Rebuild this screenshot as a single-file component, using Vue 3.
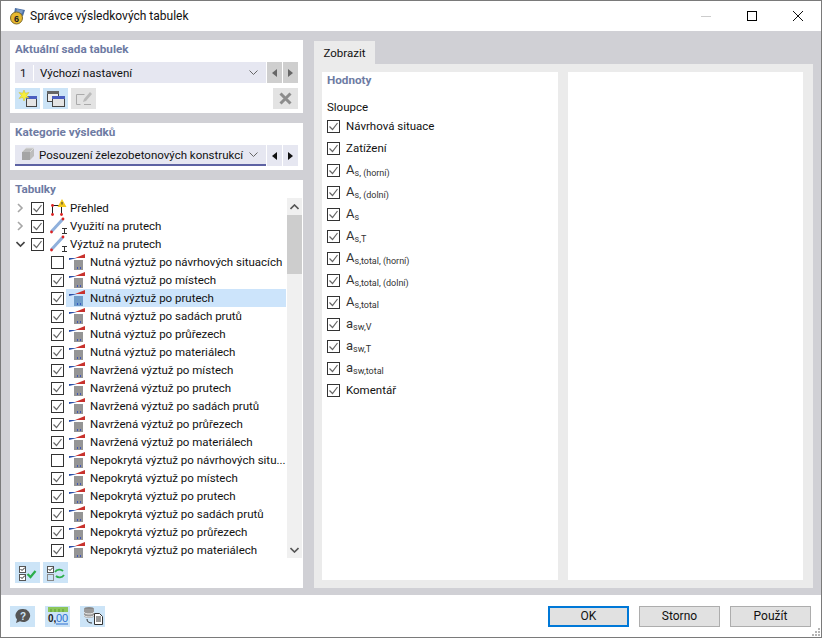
<script setup>
const tree = [
  { label: 'Přehled', icon: 'overview', chevron: 'right' },
  { label: 'Využití na prutech', icon: 'member', chevron: 'right' },
  { label: 'Výztuž na prutech', icon: 'member', chevron: 'down' },
]
const children = [
  ['Nutná výztuž po návrhových situacích', false],
  ['Nutná výztuž po místech', true],
  ['Nutná výztuž po prutech', true, true],
  ['Nutná výztuž po sadách prutů', true],
  ['Nutná výztuž po průřezech', true],
  ['Nutná výztuž po materiálech', true],
  ['Navržená výztuž po místech', true],
  ['Navržená výztuž po prutech', true],
  ['Navržená výztuž po sadách prutů', true],
  ['Navržená výztuž po průřezech', true],
  ['Navržená výztuž po materiálech', true],
  ['Nepokrytá výztuž po návrhových situ...', false],
  ['Nepokrytá výztuž po místech', true],
  ['Nepokrytá výztuž po prutech', true],
  ['Nepokrytá výztuž po sadách prutů', true],
  ['Nepokrytá výztuž po průřezech', true],
  ['Nepokrytá výztuž po materiálech', true],
]
const columns = [
  { text: 'Návrhová situace' },
  { text: 'Zatížení' },
  { main: 'A', sub: 's, (horní)' },
  { main: 'A', sub: 's, (dolní)' },
  { main: 'A', sub: 's' },
  { main: 'A', sub: 's,T' },
  { main: 'A', sub: 's,total, (horní)' },
  { main: 'A', sub: 's,total, (dolní)' },
  { main: 'A', sub: 's,total' },
  { main: 'a', sub: 'sw,V' },
  { main: 'a', sub: 'sw,T' },
  { main: 'a', sub: 'sw,total' },
  { text: 'Komentář' },
]
</script>

<template>
  <div class="window">
    <header class="titlebar">
      <svg class="app-icon" width="18" height="18" viewBox="0 0 18 18">
        <path d="M6 1l10 2-2 6-9-2z" fill="#4a6fa5" />
        <path d="M8 2l6 1.500-1 3-6-1.500z" fill="#7f9cc4" />
        <circle cx="7.500" cy="11" r="6" fill="#e8b92e" stroke="#7d6a2a" />
        <text x="7.500" y="14.500" class="app-six">6</text>
      </svg>
      <span class="title">Správce výsledkových tabulek</span>
      <div class="win-controls">
        <svg width="12" height="12" viewBox="0 0 12 12"><path d="M1 6.500h10" stroke="#ccc" /></svg>
        <svg width="12" height="12" viewBox="0 0 12 12"><rect x="1.500" y="1.500" width="9" height="9" fill="none" stroke="#000" /></svg>
        <svg width="12" height="12" viewBox="0 0 12 12"><path d="M1 1l10 10M11 1L1 11" stroke="#111" /></svg>
      </div>
    </header>

    <main class="body">
      <section class="left">
        <div class="panel set-panel">
          <h3 class="panel-title">Aktuální sada tabulek</h3>
          <div class="combo-row">
            <div class="combo">
              <span class="combo-num">1</span>
              <span class="combo-text">Výchozí nastavení</span>
              <svg class="combo-chevron" width="9" height="6" viewBox="0 0 9 6"><path d="M.5 .5l4 4 4-4" fill="none" stroke="#666" /></svg>
            </div>
            <button class="nav nav-off"><svg width="5" height="8" viewBox="0 0 5 8"><path d="M5 0v8L0 4z" fill="#666" /></svg></button>
            <button class="nav nav-off"><svg width="5" height="8" viewBox="0 0 5 8"><path d="M0 0v8l5-4z" fill="#666" /></svg></button>
          </div>
          <div class="tool-row">
            <button class="tool">
              <svg width="20" height="18" viewBox="0 0 20 18">
                <rect x="8.500" y="6.500" width="10" height="10" fill="#e4e4e4" stroke="#444" />
                <rect x="8" y="6" width="11" height="3" fill="#4a5ec0" />
                <path d="M6 0l1.300 3.200L11 2.500 8.500 5.500 11 8 7.500 7.500 6 11 4.800 7.500 1 8.500 3.500 5.500 1 2.500l3.600.7z" fill="#f6ee3a" stroke="#c9b92a" stroke-width=".5" />
              </svg>
            </button>
            <button class="tool">
              <svg width="20" height="18" viewBox="0 0 20 18">
                <rect x="1.500" y="1.500" width="11" height="10" fill="#eee" stroke="#444" />
                <rect x="1" y="1" width="12" height="3" fill="#666" />
                <rect x="6.500" y="6.500" width="12" height="10" fill="#e4e4e4" stroke="#444" />
                <rect x="6" y="6" width="13" height="3" fill="#4a5ec0" />
              </svg>
            </button>
            <button class="tool tool-off">
              <svg width="20" height="18" viewBox="0 0 20 18">
                <path d="M2.500 4.500h8M2.500 4.500v10h4M10 14.500h7" fill="none" stroke="#aaa" />
                <path d="M9 12l1-3 6-7 2 2-6 7z" fill="#bbb" />
              </svg>
            </button>
            <button class="tool tool-off tool-x">
              <svg width="13" height="13" viewBox="0 0 13 13"><path d="M1.500 1.500l10 10M11.500 1.500l-10 10" stroke="#8c8c8c" stroke-width="3" /></svg>
            </button>
          </div>
        </div>

        <div class="panel cat-panel">
          <h3 class="panel-title">Kategorie výsledků</h3>
          <div class="combo-row">
            <div class="combo combo-active">
              <svg class="cube" width="14" height="14" viewBox="0 0 14 14">
                <path d="M1 5l4-4h8v8l-4 4H1z" fill="#bdbdbd" />
                <path d="M1 5h8v8H1z" fill="#a5a5a5" />
                <path d="M9 5l4-4M1 5l4-4h8" fill="none" stroke="#dcdcdc" />
              </svg>
              <span class="combo-text">Posouzení železobetonových konstrukcí</span>
              <svg class="combo-chevron" width="9" height="6" viewBox="0 0 9 6"><path d="M.5 .5l4 4 4-4" fill="none" stroke="#666" /></svg>
            </div>
            <button class="nav"><svg width="5" height="8" viewBox="0 0 5 8"><path d="M5 0v8L0 4z" fill="#111" /></svg></button>
            <button class="nav"><svg width="5" height="8" viewBox="0 0 5 8"><path d="M0 0v8l5-4z" fill="#111" /></svg></button>
          </div>
        </div>

        <div class="panel tree-panel">
          <h3 class="panel-title">Tabulky</h3>
          <div class="tree-wrap">
            <div class="tree">
              <div v-for="item in tree" :key="item.label" class="row">
                <svg class="chev" width="9" height="10" viewBox="0 0 9 10">
                  <path v-if="item.chevron === 'right'" d="M2 1l4 4-4 4" fill="none" stroke="#a6a6a6" stroke-width="1.600" />
                  <path v-else d="M.5 3l4 4 4-4" fill="none" stroke="#444" stroke-width="1.600" />
                </svg>
                <span class="check">
                  <svg width="11" height="11" viewBox="0 0 11 11"><path d="M1.500 5.500l3 3 5-6.500" fill="none" stroke="#666" stroke-width="1.200" /></svg>
                </span>
                <svg v-if="item.icon === 'overview'" class="node-icon" width="18" height="18" viewBox="0 0 18 18">
                  <path d="M2.500 16V6.500h9V16" fill="none" stroke="#222" />
                  <circle cx="2.500" cy="6.500" r="1.400" fill="#d22" />
                  <circle cx="2.500" cy="15.500" r="1.400" fill="#d22" />
                  <circle cx="11.500" cy="15.500" r="1.400" fill="#d22" />
                  <path d="M12 0l4.500 8h-9z" fill="#f4c91e" />
                  <path d="M12 3v2.500" stroke="#333" />
                </svg>
                <svg v-else class="node-icon" width="18" height="18" viewBox="0 0 18 18">
                  <path d="M1.500 14.500L12.500 2.500" stroke="#8fb0dc" stroke-width="3" />
                  <circle cx="1.500" cy="15" r="1.400" fill="#d22" />
                  <circle cx="13" cy="2" r="1.400" fill="#d22" />
                  <path d="M12 11.500h5M12 16.500h5M14.500 11.500v5" stroke="#333" />
                </svg>
                <span class="row-label">{{ item.label }}</span>
              </div>
              <div v-for="c in children" :key="c[0]" class="row child">
                <span class="check">
                  <svg v-if="c[1]" width="11" height="11" viewBox="0 0 11 11"><path d="M1.500 5.500l3 3 5-6.500" fill="none" stroke="#666" stroke-width="1.200" /></svg>
                </span>
                <div class="child-body" :class="{ selected: c[2] }">
                  <svg class="leaf-icon" width="17" height="16" viewBox="0 0 17 16">
                    <path d="M0 4h8L0 6z" fill="#2b4fa8" />
                    <path d="M6 4l10-4v4z" fill="#c8322d" />
                    <rect x="5" y="6" width="9" height="10" :fill="c[2] ? '#6f9cc8' : '#959595'" />
                    <path d="M8 14h1M11 14h1" stroke="#2340c0" stroke-width="1.400" />
                  </svg>
                  <span class="row-label">{{ c[0] }}</span>
                </div>
              </div>
            </div>
            <div class="scrollbar">
              <div class="sb-btn"><svg width="9" height="6" viewBox="0 0 9 6"><path d="M.5 5l4-4 4 4" fill="none" stroke="#555" stroke-width="1.600" /></svg></div>
              <div class="sb-track"><div class="sb-thumb"></div></div>
              <div class="sb-btn"><svg width="9" height="6" viewBox="0 0 9 6"><path d="M.5 1l4 4 4-4" fill="none" stroke="#555" stroke-width="1.600" /></svg></div>
            </div>
          </div>
          <div class="tool-row tree-tools">
            <button class="tool">
              <svg width="20" height="18" viewBox="0 0 20 18">
                <rect x="1.500" y="2.500" width="6" height="6" fill="#fff" stroke="#555" />
                <rect x="1.500" y="10.500" width="6" height="6" fill="#fff" stroke="#555" />
                <path d="M2.500 5l1.500 1.500 3-3M2.500 13l1.500 1.500 3-3" fill="none" stroke="#222" />
                <path d="M9.500 10l3 3 5-6" fill="none" stroke="#2cae4a" stroke-width="2.200" />
              </svg>
            </button>
            <button class="tool">
              <svg width="20" height="18" viewBox="0 0 20 18">
                <rect x="1.500" y="2.500" width="6" height="6" fill="#fff" stroke="#555" />
                <rect x="1.500" y="10.500" width="6" height="6" fill="none" stroke="#888" />
                <path d="M2.500 5l1.500 1.500 3-3" fill="none" stroke="#222" />
                <path d="M9 8c2-3 6-3 8-1M18 11c-2 3-6 3-8 1" fill="none" stroke="#2cae4a" stroke-width="1.800" />
              </svg>
            </button>
          </div>
        </div>
      </section>

      <section class="right">
        <div class="tab">Zobrazit</div>
        <div class="tab-body">
          <div class="column-pane">
            <h3 class="panel-title hodnoty">Hodnoty</h3>
            <div class="sloupce">Sloupce</div>
            <div v-for="col in columns" :key="col.text || col.main + col.sub" class="col-row">
              <span class="check">
                <svg width="11" height="11" viewBox="0 0 11 11"><path d="M1.500 5.500l3 3 5-6.500" fill="none" stroke="#666" stroke-width="1.200" /></svg>
              </span>
              <span v-if="col.text" class="col-text">{{ col.text }}</span>
              <span v-else class="col-text sym">{{ col.main }}<sub>{{ col.sub }}</sub></span>
            </div>
          </div>
          <div class="empty-pane"></div>
        </div>
      </section>
    </main>

    <footer class="footer">
      <div class="foot-icons">
        <button class="tool">
          <svg width="20" height="18" viewBox="0 0 20 18">
            <path d="M10 2a7 6.500 0 1 1-3 12.300L3 16l1-3.500A7 6.500 0 0 1 10 2z" fill="#555" />
            <text x="10" y="12.500" class="help-mark">?</text>
          </svg>
        </button>
        <button class="tool">
          <svg width="22" height="20" viewBox="0 0 22 20">
            <rect x="1" y="1" width="20" height="5" fill="#8cc65a" />
            <path d="M4 3v3M8 3v3M12 3v3M16 3v3" stroke="#5c9a35" />
            <text x="1" y="16" class="num-a">0,</text>
            <text x="9" y="16" class="num-b">00</text>
            <path d="M9 18h12" stroke="#2a6fd0" />
          </svg>
        </button>
        <button class="tool">
          <svg width="22" height="20" viewBox="0 0 22 20">
            <ellipse cx="7" cy="3" rx="5" ry="2" fill="#888" />
            <path d="M2 3v7c0 2.600 10 2.600 10 0V3" fill="#9a9a9a" />
            <path d="M2 6c0 2.600 10 2.600 10 0M2 9c0 2.600 10 2.600 10 0" fill="none" stroke="#eee" />
            <path d="M5 13c0 3 2 4 5 4" fill="none" stroke="#333" />
            <path d="M12.500 7.500h5l3 3v8h-8z" fill="#fff" stroke="#333" />
            <path d="M14 11h5M14 13h5M14 15h5" stroke="#333" />
          </svg>
        </button>
      </div>
      <div class="foot-buttons">
        <button class="btn btn-primary">OK</button>
        <button class="btn">Storno</button>
        <button class="btn">Použít</button>
      </div>
      <svg class="grip" width="9" height="9" viewBox="0 0 9 9">
        <path d="M7 1h2v2H7zM4 4h2v2H4zM7 4h2v2H7zM1 7h2v2H1zM4 7h2v2H4zM7 7h2v2H7z" fill="#b5b5b5" />
      </svg>
    </footer>
  </div>
</template>

<style>
html, body { margin: 0; padding: 0; background: #fff; }
</style>

<style scoped>
* { box-sizing: border-box; }
.window {
  width: 822px;
  height: 638px;
  display: flex;
  flex-direction: column;
  border: 1px solid #7a7a7a;
  background: #fff;
  font-family: Roboto, "Open Sans", sans-serif;
  font-size: 11.500px;
  color: #111;
  overflow: hidden;
}
button { font-family: inherit; padding: 0; border: 0; }

.titlebar {
  height: 30px;
  flex: none;
  display: flex;
  align-items: center;
  padding: 0 0 1px 8px;
}
.app-icon { margin-right: 3px; }
.app-six { font: bold 9px "Liberation Sans", sans-serif; fill: #222; text-anchor: middle; }
.title { font-size: 12px; }
.win-controls {
  margin-left: auto;
  display: flex;
  align-items: center;
  gap: 34px;
  padding-right: 17px;
}

.body {
  flex: 1;
  min-height: 0;
  display: flex;
  gap: 11px;
  padding: 9px 8px 7px 9px;
  background: #d0d0d5;
}
.left { width: 293px; flex: none; display: flex; flex-direction: column; gap: 10px; }
.panel { background: #fff; padding: 2px 5px 0; }
.set-panel { height: 73px; }
.cat-panel { height: 47px; }
.tree-panel { flex: 1; min-height: 0; display: flex; flex-direction: column; }
.panel-title {
  margin: 0;
  font-size: 11.700px;
  line-height: 15px;
  font-weight: 700;
  color: #6e7ba3;
}
.combo-row { display: flex; gap: 1px; margin-top: 5px; height: 21px; }
.combo {
  flex: 1;
  min-width: 0;
  display: flex;
  align-items: center;
  background: #e6e7f1;
  padding: 0 8px 0 5px;
}
.combo-num { width: 12px; }
.combo-text { padding-left: 6px; white-space: nowrap; border-left: 1px solid #fff; line-height: 16px; margin-left: 1px; }
.combo-chevron { margin-left: auto; }
.combo-active { border-bottom: 2px solid #5d62a3; padding-left: 6px; }
.combo-active .combo-text { border-left: 0; padding-left: 4px; margin: 0; }
.cube { flex: none; margin-top: -2px; }
.nav {
  width: 15px;
  flex: none;
  background: #e6e7f1;
  display: flex;
  align-items: center;
  justify-content: center;
}
.nav-off { background: #cfcfcf; }
.tool-row { display: flex; gap: 3px; margin-top: 5px; }
.tool {
  width: 25px;
  height: 21px;
  background: #cce4f7;
  display: flex;
  align-items: center;
  justify-content: center;
}
.tool-off { background: #e3e3e3; }
.tool-x { margin-left: auto; }

.tree-wrap { display: flex; margin-top: 1px; height: 360px; margin-right: -4px; }
.tree { width: 272px; flex: none; padding-top: 1px; overflow: hidden; }
.row { height: 18px; display: flex; align-items: center; white-space: nowrap; }
.chev { flex: none; margin: 0 6px 0 1px; }
.check {
  width: 13px;
  height: 13px;
  flex: none;
  border: 1px solid #333;
  background: #fff;
  display: flex;
  align-items: center;
  justify-content: center;
}
.node-icon { flex: none; margin: 0 2px 0 6px; }
.child { padding-left: 36px; }
.child-body {
  flex: 1;
  min-width: 0;
  height: 18px;
  margin: 0 1px 0 2px;
  padding-left: 3px;
  display: flex;
  align-items: center;
}
.selected { background: #cce4fb; }
.leaf-icon { flex: none; margin-right: 4px; }
.row-label { line-height: 18px; }
.scrollbar {
  width: 15px;
  flex: none;
  display: flex;
  flex-direction: column;
  background: #f0f0f0;
}
.sb-btn { height: 17px; flex: none; display: flex; align-items: center; justify-content: center; }
.sb-track { flex: 1; }
.sb-thumb { height: 59px; background: #cdcdcd; }
.tree-tools { margin-top: 4px; }

.right { flex: 1; min-width: 0; display: flex; flex-direction: column; }
.tab {
  width: 61px;
  height: 23px;
  flex: none;
  margin-top: 1px;
  background: #ebebeb;
  display: flex;
  align-items: center;
  justify-content: center;
}
.tab-body {
  flex: 1;
  min-height: 0;
  display: flex;
  gap: 10px;
  padding: 8px 10px 8px 8px;
  background: #ebebeb;
}
.column-pane { width: 236px; flex: none; background: #fff; padding: 0 5px; }
.empty-pane { flex: 1; background: #fff; }
.hodnoty { line-height: 16px; }
.sloupce { margin-top: 11px; line-height: 16px; }
.col-row { height: 22px; display: flex; align-items: center; }
.col-text { margin-left: 6px; white-space: nowrap; }
.sym { font-size: 13px; color: #333; margin-bottom: 2px; }
.sym sub { font-size: 9px; vertical-align: baseline; position: relative; top: 2px; }

.footer {
  height: 42px;
  flex: none;
  position: relative;
  display: flex;
  align-items: center;
  padding: 0 10px 0 9px;
}
.foot-icons { display: flex; gap: 10px; }
.foot-buttons { margin-left: auto; display: flex; gap: 10px; }
.btn {
  width: 81px;
  height: 21px;
  background: #e1e1e1;
  border: 1px solid #adadad;
  font-size: 12px;
  color: #111;
}
.btn-primary { border: 2px solid #0078d7; }
.grip { position: absolute; right: 1px; bottom: 1px; }
.help-mark { font: bold 10px "Liberation Sans", sans-serif; fill: #cce4f7; text-anchor: middle; }
.num-a { font: bold 10px "Liberation Sans", sans-serif; fill: #222; }
.num-b { font: 11px "Liberation Sans", sans-serif; fill: #2a6fd0; }
</style>
